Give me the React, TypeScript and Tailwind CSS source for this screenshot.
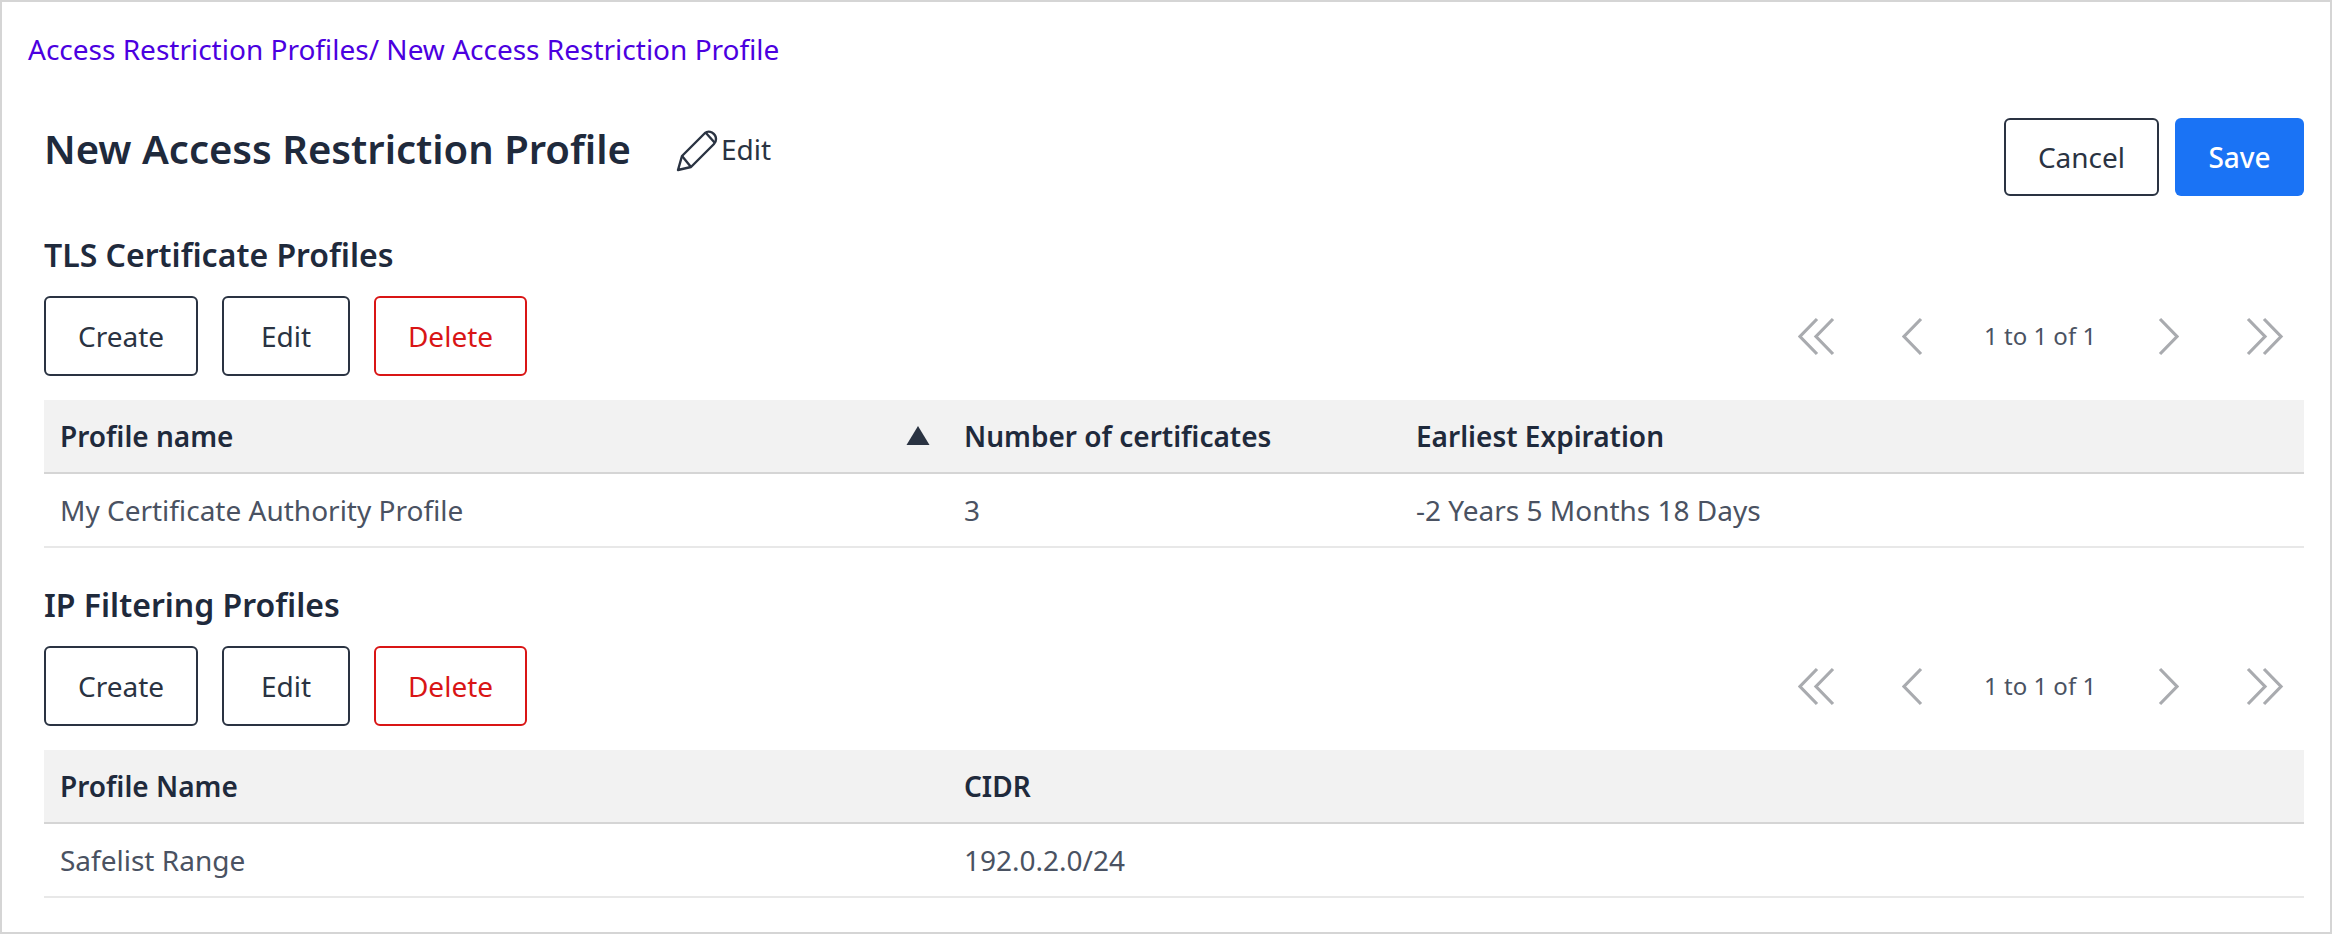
const font = "font-['Noto_Sans',sans-serif]";

function Btn({ label, w, danger }: { label: string; w: string; danger?: boolean }) {
  return (
    <button
      className={`${w} h-[80px] rounded-[6px] border-2 bg-white text-[28px] ${
        danger ? "border-[#d91515] text-[#d91515]" : "border-[#2a3342] text-[#2a3342]"
      }`}
    >
      {label}
    </button>
  );
}

function Chevrons({ dir, double }: { dir: "l" | "r"; double?: boolean }) {
  const pts = (x: number) =>
    dir === "l" ? `${x + 17},2 ${x},19.5 ${x + 17},37` : `${x},2 ${x + 17},19.5 ${x},37`;
  const w = double ? 38 : 21;
  return (
    <svg width={w} height="39" viewBox={`0 0 ${w} 39`} fill="none" stroke="#a9abaf" strokeWidth="3.2">
      <polyline points={pts(2)} />
      {double && <polyline points={pts(18)} />}
    </svg>
  );
}

function Section({
  title,
  cols,
  row,
  mtTitle,
  sort,
}: {
  title: string;
  cols: string[];
  row: string[];
  mtTitle: string;
  sort?: boolean;
}) {
  return (
    <section className={mtTitle}>
      <h2 className="text-[32px] leading-[42px] font-semibold text-[#1f2a3c]">{title}</h2>
      <div className="mt-[20px] flex items-center justify-between">
        <div className="flex gap-[24px]">
          <Btn label="Create" w="w-[154px]" />
          <Btn label="Edit" w="w-[128px]" />
          <Btn label="Delete" w="w-[153px]" danger />
        </div>
        <div className="flex items-center pr-[20px] text-[#4a5262]">
          <Chevrons dir="l" double />
          <div className="ml-[66px]"><Chevrons dir="l" /></div>
          <span className="mr-[62px] ml-[61px] w-[112px] text-center text-[24px] whitespace-nowrap">1 to 1 of 1</span>
          <Chevrons dir="r" />
          <div className="ml-[67px]"><Chevrons dir="r" double /></div>
        </div>
      </div>
      <div className="mt-[24px]">
        <div className="flex h-[74px] items-center border-b-2 border-[#d5d5d5] bg-[#f2f2f2] text-[28px] font-semibold text-[#1f2a3c]">
          <div className="flex w-[904px] items-center justify-between px-[16px]">
            <span>{cols[0]}</span>
            {sort && (
              <svg width="24" height="20" viewBox="0 0 24 20" className="mt-[-1px] mr-[2px]">
                <polygon points="12,0 23.5,19 0.5,19" fill="#2a3342" />
              </svg>
            )}
          </div>
          <div className="w-[452px] px-[16px]">{cols[1]}</div>
          {cols[2] && <div className="flex-1 px-[16px]">{cols[2]}</div>}
        </div>
        <div className="flex h-[74px] items-center border-b-2 border-[#e8e8e8] text-[28px] text-[#4a5262]">
          <div className="w-[904px] px-[16px]">{row[0]}</div>
          <div className="w-[452px] px-[16px]">{row[1]}</div>
          {row[2] && <div className="flex-1 px-[16px]">{row[2]}</div>}
        </div>
      </div>
    </section>
  );
}

export default function App() {
  return (
    <div className={`${font} h-[934px] w-[2332px] border-2 border-[#d5d5d5] bg-white`}>
      <div className="pt-[29px] pl-[26px] text-[28px] leading-[36px] text-[#4b00e0]">
        Access Restriction Profiles/ New Access Restriction Profile
      </div>
      <div className="px-[26px] pl-[42px]">
        <div className="mt-[52px] flex items-start justify-between">
          <div className="flex items-center pt-[4px]">
            <h1 className="text-[40px] leading-[52px] font-semibold text-[#1f2a3c]">
              New Access Restriction Profile
            </h1>
            <svg width="42" height="42" viewBox="0 0 42 42" fill="none" stroke="#2a3342" strokeWidth="2.4" strokeLinejoin="round" className="mt-[4px] ml-[45px]">
              <path d="M2 40 L6 26 L29 3 Q32 0.5 36 2.5 Q40 5 40 9 Q40 12 38 14 L15 37 Z" />
              <path d="M6 26 L15 37" />
              <path d="M30 3 L39 13" />
            </svg>
            <span className="ml-[3px] text-[28px] text-[#2a3342]">Edit</span>
          </div>
          <div className="mt-[-1px] flex gap-[16px]">
            <button className="h-[78px] w-[155px] rounded-[6px] border-2 border-[#2a3342] text-[28px] text-[#2a3342]">Cancel</button>
            <button className="h-[78px] w-[129px] rounded-[6px] bg-[#1a73f5] text-[28px] font-medium text-white">Save</button>
          </div>
        </div>
        <Section
          mtTitle="mt-[38px]"
          title="TLS Certificate Profiles"
          sort
          cols={["Profile name", "Number of certificates", "Earliest Expiration"]}
          row={["My Certificate Authority Profile", "3", "-2 Years 5 Months 18 Days"]}
        />
        <Section
          mtTitle="mt-[36px]"
          title="IP Filtering Profiles"
          cols={["Profile Name", "CIDR"]}
          row={["Safelist Range", "192.0.2.0/24"]}
        />
      </div>
    </div>
  );
}
